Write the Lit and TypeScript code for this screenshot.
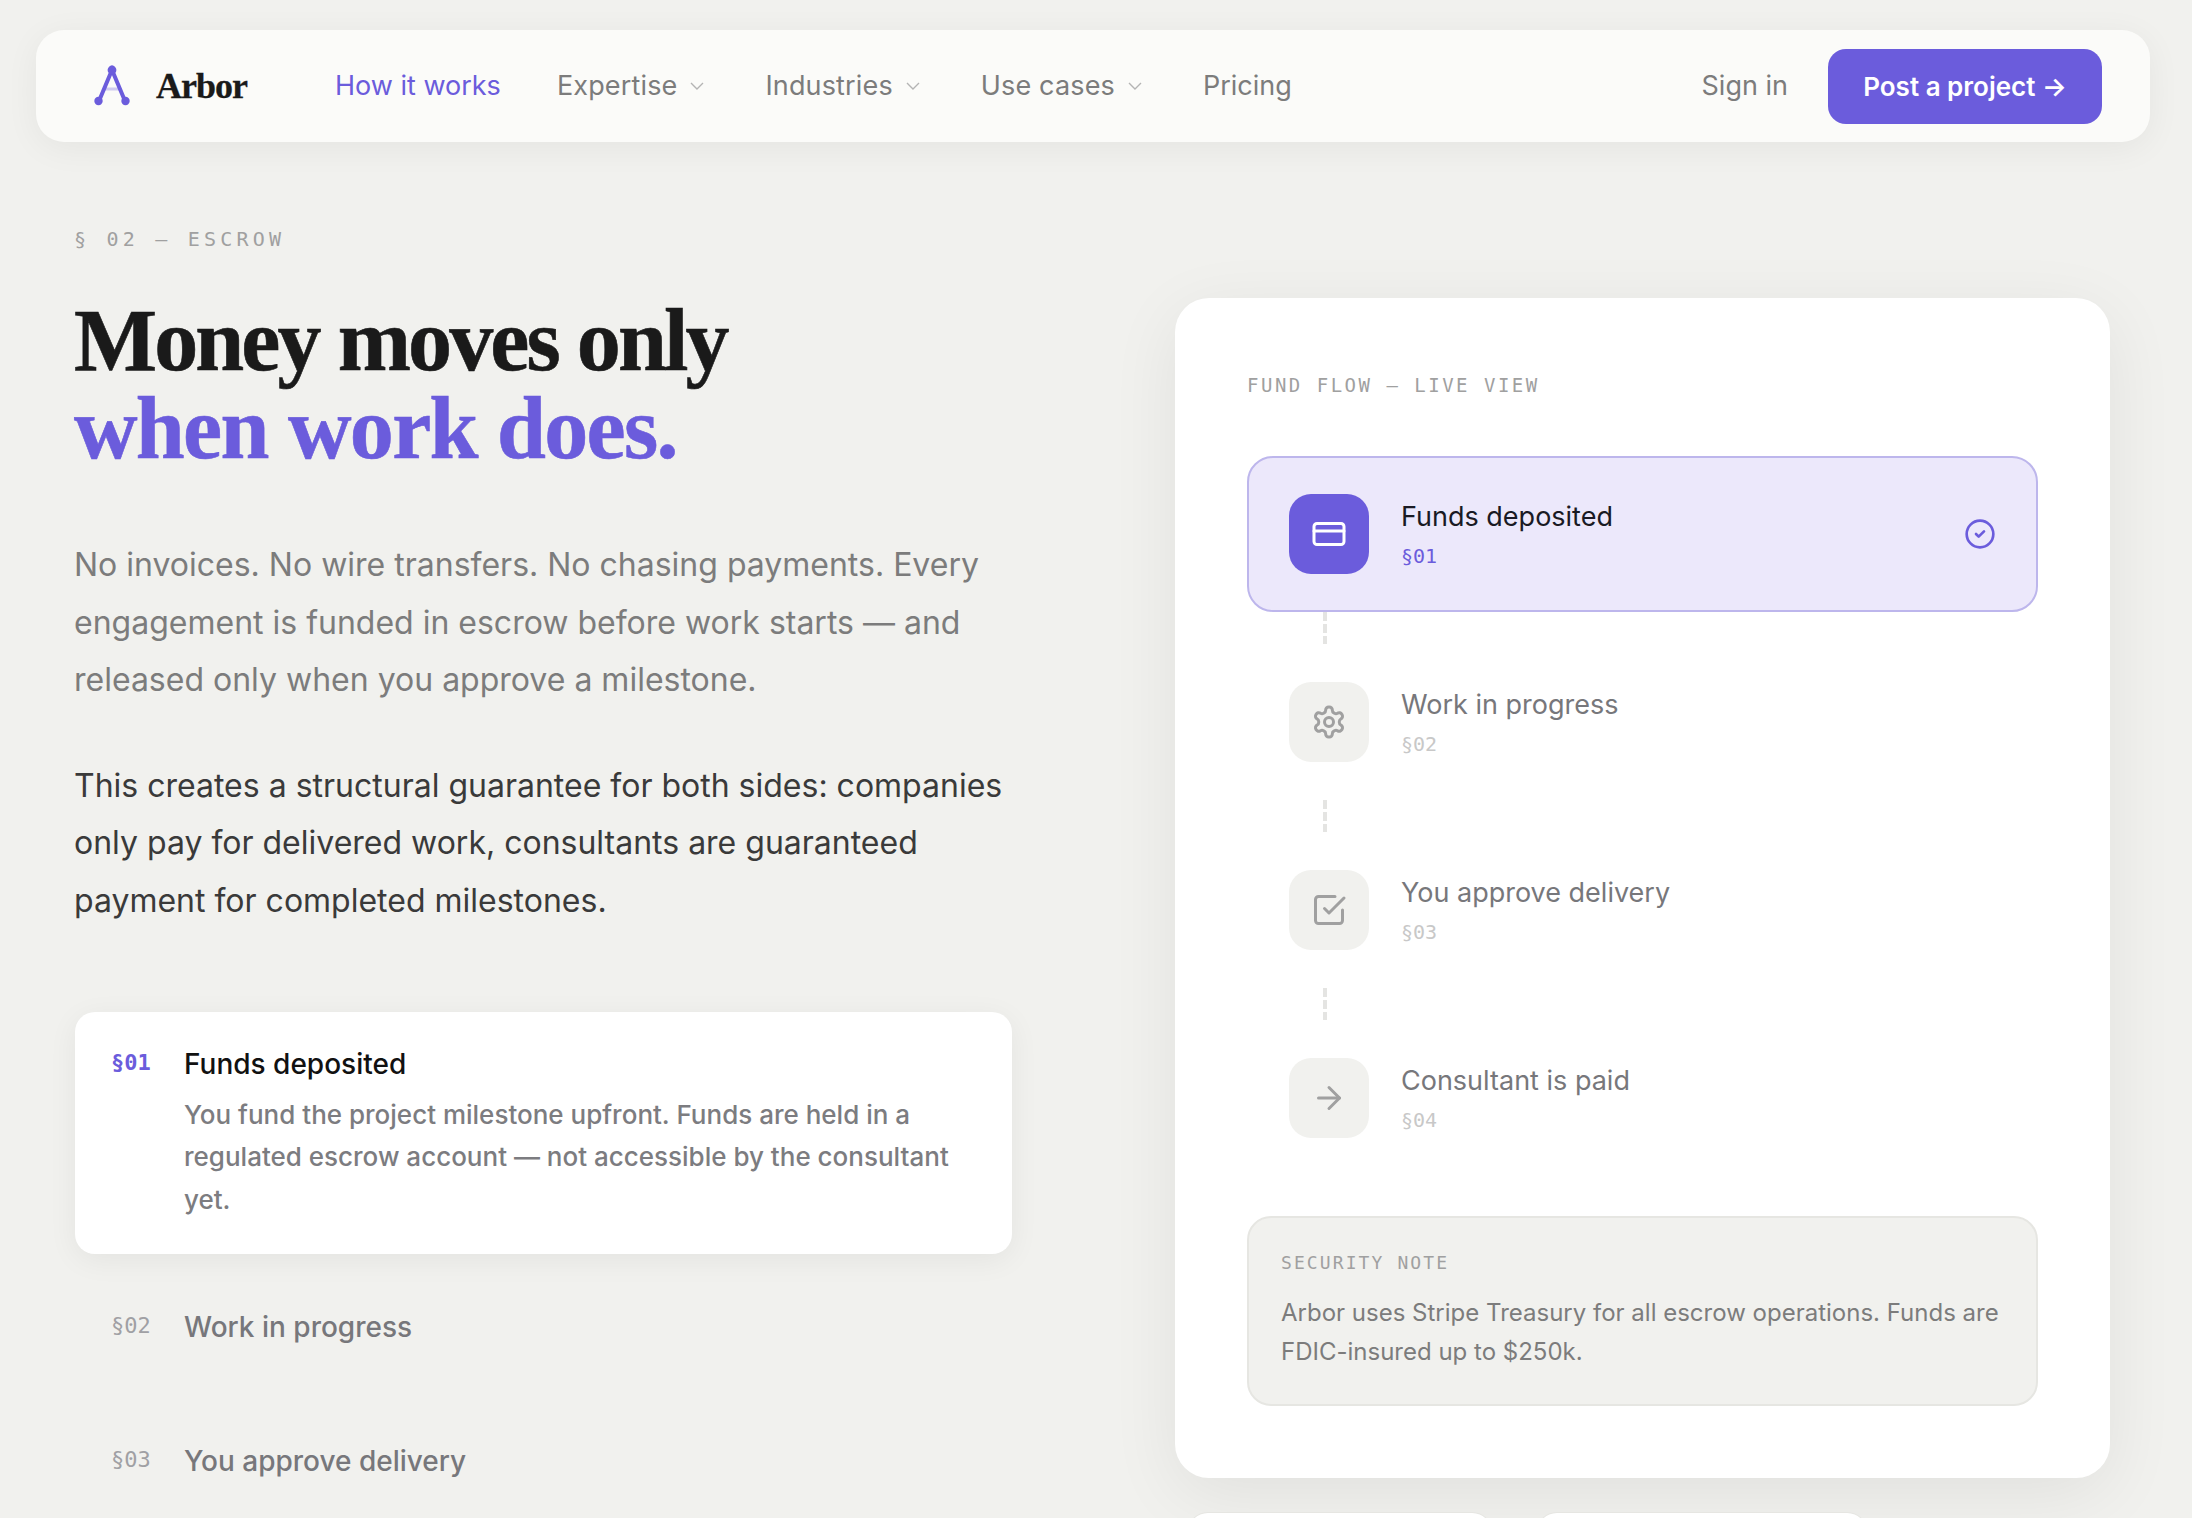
import {css, html, LitElement, svg} from 'lit';
import {customElement} from 'lit/decorators.js';

const navLinks = [
	{label: 'How it works', active: true},
	{label: 'Expertise', caret: true},
	{label: 'Industries', caret: true},
	{label: 'Use cases', caret: true},
	{label: 'Pricing'},
];

const steps = [
	{code: '§01', title: 'Funds deposited', body: 'You fund the project milestone upfront. Funds are held in a regulated escrow account — not accessible by the consultant yet.'},
	{code: '§02', title: 'Work in progress'},
	{code: '§03', title: 'You approve delivery'},
];

const icons = {
	card: svg`<rect x="2" y="5" width="20" height="14" rx="2"/><line x1="2" y1="10" x2="22" y2="10"/>`,
	gear: svg`<path d="M12.22 2h-.44a2 2 0 0 0-2 2v.18a2 2 0 0 1-1 1.73l-.43.25a2 2 0 0 1-2 0l-.15-.08a2 2 0 0 0-2.73.73l-.22.38a2 2 0 0 0 .73 2.73l.15.1a2 2 0 0 1 1 1.72v.51a2 2 0 0 1-1 1.74l-.15.09a2 2 0 0 0-.73 2.73l.22.38a2 2 0 0 0 2.73.73l.15-.08a2 2 0 0 1 2 0l.43.25a2 2 0 0 1 1 1.73V20a2 2 0 0 0 2 2h.44a2 2 0 0 0 2-2v-.18a2 2 0 0 1 1-1.73l.43-.25a2 2 0 0 1 2 0l.15.08a2 2 0 0 0 2.73-.73l.22-.39a2 2 0 0 0-.73-2.73l-.15-.08a2 2 0 0 1-1-1.74v-.5a2 2 0 0 1 1-1.74l.15-.09a2 2 0 0 0 .73-2.73l-.22-.38a2 2 0 0 0-2.73-.73l-.15.08a2 2 0 0 1-2 0l-.43-.25a2 2 0 0 1-1-1.73V4a2 2 0 0 0-2-2z"/><circle cx="12" cy="12" r="3"/>`,
	check: svg`<path d="m9 11 3 3L22 4"/><path d="M21 12v7a2 2 0 0 1-2 2H5a2 2 0 0 1-2-2V5a2 2 0 0 1 2-2h11"/>`,
	arrow: svg`<path d="M5 12h14"/><path d="m12 5 7 7-7 7"/>`,
};

const flow = [
	{code: '§01', title: 'Funds deposited', icon: icons.card, active: true},
	{code: '§02', title: 'Work in progress', icon: icons.gear},
	{code: '§03', title: 'You approve delivery', icon: icons.check},
	{code: '§04', title: 'Consultant is paid', icon: icons.arrow},
];

@customElement('app-root')
export class AppRoot extends LitElement {
	protected render() {
		return html`
		<nav class="nav">
			<a class="brand">
				<svg class="logo" viewBox="0 0 40 46">
					<line x1="12" y1="26" x2="28" y2="26" stroke="#6b5cdc" stroke-width="3" opacity=".3"/>
					<path d="M7 38 20 7l13 31" fill="none" stroke="#6b5cdc" stroke-width="4"/>
					<circle cx="20" cy="7" r="4.4" fill="#6b5cdc"/>
					<circle cx="6.5" cy="38" r="4.2" fill="#6b5cdc"/>
					<circle cx="33.5" cy="38" r="4.2" fill="#6b5cdc"/>
				</svg>
				<span class="wordmark">Arbor</span>
			</a>
			<div class="links">
				${navLinks.map((l) => html`
					<a class="link ${l.active ? 'on' : ''} ${l.caret ? 'drop' : ''}">${l.label}${l.caret ? html`
						<svg class="caret" viewBox="0 0 14 8"><path d="M1 1l6 6 6-6"/></svg>` : ''}</a>
				`)}
			</div>
			<a class="link signin">Sign in</a>
			<a class="cta">Post a project →</a>
		</nav>
		<main class="main">
			<section class="left">
				<div class="eyebrow">§ 02 — ESCROW</div>
				<h1>Money moves only<br><em>when work does.</em></h1>
				<p class="lead">No invoices. No wire transfers. No chasing payments. Every engagement is funded in escrow before work starts — and released only when you approve a milestone.</p>
				<p class="lead dark">This creates a structural guarantee for both sides: companies only pay for delivered work, consultants are guaranteed payment for completed milestones.</p>
				<div class="steps">
					${steps.map((s) => html`
						<div class="step ${s.body ? 'open' : ''}">
							<span class="code">${s.code}</span>
							<div>
								<div class="step-title">${s.title}</div>
								${s.body ? html`<div class="step-body">${s.body}</div>` : ''}
							</div>
						</div>
					`)}
				</div>
			</section>
			<aside class="right">
				<div class="panel">
					<div class="panel-label">FUND FLOW — LIVE VIEW</div>
					${flow.map((f, i) => html`
						${i ? html`<div class="dash"></div>` : ''}
						<div class="flow ${f.active ? 'on' : ''}">
							<span class="tile"><svg class="ico" viewBox="0 0 24 24">${f.icon}</svg></span>
							<div class="flow-text">
								<div class="flow-title">${f.title}</div>
								<div class="flow-code">${f.code}</div>
							</div>
							${f.active ? html`<svg class="done" viewBox="0 0 24 24"><circle cx="12" cy="12" r="10"/><path d="m9 12 2 2 4-4"/></svg>` : ''}
						</div>
					`)}
					<div class="note">
						<div class="note-label">SECURITY NOTE</div>
						<div class="note-body">Arbor uses Stripe Treasury for all escrow operations. Funds are FDIC-insured up to $250k.</div>
					</div>
				</div>
				<div class="stats">
					<div class="stat a"></div>
					<div class="stat b"></div>
				</div>
			</aside>
		</main>
		`;
	}

	static styles = css`
		:host {
			display: block;
			height: 1518px;
			overflow: hidden;
			background: #f1f1ee;
			font-family: Inter, sans-serif;
			color: #1a1a1a;
		}

		.nav {
			display: flex;
			align-items: center;
			height: 112px;
			box-sizing: border-box;
			margin: 30px 42px 0 36px;
			padding: 0 48px 0 56px;
			background: #fbfbf9;
			border-radius: 28px;
			box-shadow: 0 6px 34px rgba(0, 0, 0, .055);
		}
		.brand { display: flex; align-items: center; gap: 24px; }
		.logo { width: 40px; height: 46px; }
		.wordmark {
			font: 700 36px "Liberation Serif", serif;
			letter-spacing: -1px;
			color: #1a1a1a;
			-webkit-text-stroke: .3px currentColor;
		}
		.links { display: flex; align-items: center; gap: 56px; margin-left: 88px; flex: 1; }
		.link {
			display: flex;
			align-items: center;
			gap: 13px;
			padding-bottom: 2px;
			font-size: 27px;
			color: #7c7c7c;
		}
		.link.on { color: #6b5cdc; }
		.link.drop { letter-spacing: .15px; margin-right: 5px; }
		.caret { width: 14px; height: 8px; margin-top: 2px; fill: none; stroke: #b4b4b4; stroke-width: 1.4; }
		.signin { margin-right: 40px; }
		.cta {
			display: flex;
			align-items: center;
			justify-content: center;
			width: 274px;
			height: 75px;
			background: #6b5cdc;
			color: #fff;
			font-size: 26px;
			font-weight: 600;
			border-radius: 18px;
		}

		.main {
			display: grid;
			grid-template-columns: 938px 935px;
			column-gap: 163px;
			padding: 84px 0 0 74px;
		}

		.eyebrow {
			font: 20px/26px "DejaVu Sans Mono", monospace;
			letter-spacing: 4.2px;
			color: #a0a0a0;
		}
		h1 {
			margin: 45px 0 0;
			font: 700 88px/88px "Liberation Serif", serif;
			letter-spacing: -2.9px;
			color: #1a1a1a;
			-webkit-text-stroke: .6px currentColor;
		}
		h1 em { font-style: normal; color: #6b5cdc; letter-spacing: -1.7px; }
		.lead {
			margin: 63px 0 0;
			font-size: 32px;
			line-height: 57.6px;
			color: #7c7c7c;
		}
		.lead.dark { color: #3a3a3a; margin-top: 48px; }

		.steps { display: flex; flex-direction: column; gap: 20.6px; margin: 82px 0 0 1px; }
		.step {
			display: flex;
			gap: 34px;
			padding: 35.4px 36px 44px;
			border-radius: 20px;
		}
		.step.open {
			background: #fff;
			padding-bottom: 32.1px;
			box-shadow: 0 6px 30px rgba(0, 0, 0, .06);
		}
		.code {
			flex: none;
			font: 22px/32px "DejaVu Sans Mono", monospace;
			color: #a0a0a4;
			width: 39px;
		}
		.open .code { color: #6b5cdc; font-weight: 700; }
		.step-title { font-size: 28px; line-height: 34px; font-weight: 500; color: #77777b; }
		.open .step-title { color: #111; }
		.step-body { margin-top: 13px; font-size: 26px; line-height: 42.5px; font-weight: 500; color: #7c7c80; }

		.right { padding-top: 72px; }
		.panel {
			background: #fff;
			padding: 72px;
			border-radius: 34px;
			box-shadow: 0 16px 70px rgba(0, 0, 0, .07);
		}
		.panel-label {
			font: 19px/30px "DejaVu Sans Mono", monospace;
			letter-spacing: 2.5px;
			color: #a0a0a0;
			margin-bottom: 56px;
		}
		.flow {
			display: flex;
			align-items: center;
			gap: 32px;
			padding: 36px 40px;
			border: 2px solid transparent;
			border-radius: 26px;
		}
		.flow.on { background: #ece8fb; border-color: #bdb6ec; }
		.tile {
			display: flex;
			align-items: center;
			justify-content: center;
			width: 80px;
			height: 80px;
			background: #f1f1ee;
			border-radius: 22px;
		}
		.on .tile { background: #6b5cdc; }
		.ico {
			width: 36px;
			height: 36px;
			fill: none;
			stroke: #a0a0a0;
			stroke-width: 2;
			stroke-linecap: round;
			stroke-linejoin: round;
		}
		.on .ico { stroke: #fff; }
		.flow-text { flex: 1; }
		.flow-title { font-size: 27px; line-height: 34px; color: #77777b; }
		.on .flow-title { color: #1a1a24; }
		.flow-code { margin-top: 9px; font: 20px/26px "DejaVu Sans Mono", monospace; color: #c8c8c8; }
		.on .flow-code { color: #6b5cdc; }
		.done {
			width: 32px;
			height: 32px;
			fill: none;
			stroke: #6b5cdc;
			stroke-width: 2;
			stroke-linecap: round;
			stroke-linejoin: round;
		}
		.dash {
			width: 4px;
			height: 32px;
			margin-left: 76px;
			background: repeating-linear-gradient(#e4e4e2 0 9px, transparent 9px 12px);
		}

		.note {
			margin-top: 40px;
			padding: 31px 32px 33px;
			background: #f1f1ee;
			border: 2px solid #e6e6e2;
			border-radius: 24px;
		}
		.note-label {
			font: 18px/28px "DejaVu Sans Mono", monospace;
			letter-spacing: 2.1px;
			color: #a0a0a0;
		}
		.note-body { margin-top: 16px; font-size: 24px; line-height: 39px; color: #7c7c7c; }

		.stats { display: flex; gap: 45px; margin: 35px 0 0 13px; }
		.stat {
			height: 110px;
			background: #fff;
			border-radius: 20px;
			box-shadow: 0 0 0 1px #e6e6e2;
		}
		.stat.a { width: 304px; }
		.stat.b { width: 330px; }
	`;
}
